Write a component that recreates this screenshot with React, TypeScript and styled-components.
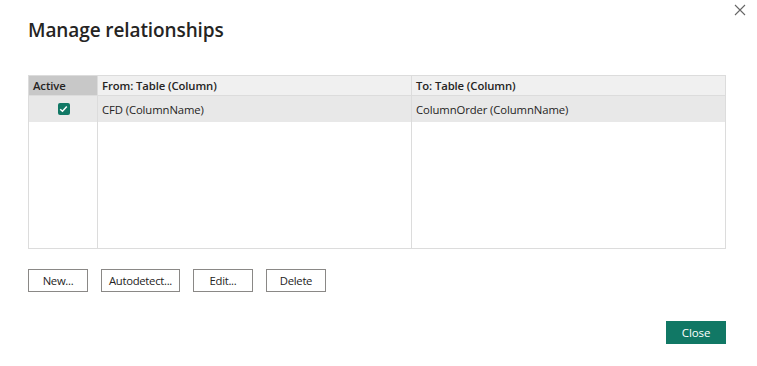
import React from "react";
import styled, { createGlobalStyle } from "styled-components";

const GlobalStyle = createGlobalStyle`
  html, body {
    margin: 0;
    padding: 0;
    background: #ffffff;
    font-family: "Open Sans", "Noto Sans", sans-serif;
    color: #252423;
  }
`;

const Dialog = styled.div`
  position: relative;
  width: 757px;
  height: 366px;
  box-sizing: border-box;
  padding: 14px 31px 0 28px;
  display: flex;
  flex-direction: column;
`;

const CloseX = styled.button`
  position: absolute;
  top: 3px;
  right: 10px;
  width: 14px;
  height: 14px;
  padding: 0;
  border: none;
  background: transparent;
  display: flex;
  align-items: center;
  justify-content: center;
`;

const Title = styled.h1`
  margin: 0;
  font-size: 19px;
  font-weight: 600;
  line-height: 32px;
  color: #252423;
  letter-spacing: -0.1px;
`;

const Table = styled.div`
  margin-top: 29px;
  height: 174px;
  box-sizing: border-box;
  border: 1px solid #dcdcdc;
  display: grid;
  grid-template-columns: 68px 314px 1fr;
  grid-template-rows: 20px 26px 1fr;
`;

const HeadCell = styled.div<{ $active?: boolean; $first?: boolean }>`
  background: ${(p) => (p.$active ? "#c8c8c8" : "#f0f0f0")};
  border-left: ${(p) => (p.$first ? "none" : "1px solid #dcdcdc")};
  border-bottom: 1px solid #dcdcdc;
  font-size: 11.3px;
  font-weight: 600;
  line-height: 20px;
  padding-left: 4px;
  color: #252423;
  white-space: nowrap;
  overflow: hidden;
  letter-spacing: -0.1px;
`;

const Cell = styled.div<{ $first?: boolean; $center?: boolean; $filled?: boolean }>`
  background: ${(p) => (p.$filled ? "#e8e8e8" : "#ffffff")};
  border-left: ${(p) => (p.$first ? "none" : "1px solid #dcdcdc")};
  font-size: 11.3px;
  line-height: 25px;
  padding-left: 4px;
  color: #252423;
  display: flex;
  align-items: center;
  justify-content: ${(p) => (p.$center ? "center" : "flex-start")};
  white-space: nowrap;
  letter-spacing: -0.1px;
`;

const Check = styled.span`
  width: 12px;
  height: 12px;
  border-radius: 2px;
  background: #117865;
  display: flex;
  align-items: center;
  justify-content: center;
  margin-right: 3px;
`;

const ButtonRow = styled.div`
  display: flex;
  gap: 13px;
  margin-top: 20px;
`;

const Button = styled.button<{ $w: number }>`
  width: ${(p) => p.$w}px;
  height: 23px;
  box-sizing: border-box;
  background: #ffffff;
  border: 1px solid #8a8886;
  font-family: "Open Sans", "Noto Sans", sans-serif;
  font-size: 11.3px;
  color: #252423;
  padding: 0;
  letter-spacing: -0.3px;
`;

const Footer = styled.div`
  display: flex;
  justify-content: flex-end;
  margin-top: 29px;
`;

const PrimaryButton = styled.button`
  width: 60px;
  height: 23px;
  background: #117865;
  border: none;
  color: #ffffff;
  font-family: "Open Sans", "Noto Sans", sans-serif;
  font-size: 11.5px;
  padding: 0;
  letter-spacing: -0.1px;
`;

export default function App() {
  return (
    <>
      <GlobalStyle />
      <Dialog>
        <CloseX aria-label="Close">
          <svg width="12" height="12" viewBox="0 0 12 12">
            <path d="M1 1 L11 11 M11 1 L1 11" stroke="#666" strokeWidth="1.1" />
          </svg>
        </CloseX>
        <Title>Manage relationships</Title>
        <Table>
          <HeadCell $active $first>Active</HeadCell>
          <HeadCell>From: Table (Column)</HeadCell>
          <HeadCell>To: Table (Column)</HeadCell>
          <Cell $first $center $filled>
            <Check>
              <svg width="9" height="8" viewBox="0 0 9 8">
                <path d="M1.2 4.2 L3.5 6.3 L7.8 1.6" fill="none" stroke="#fff" strokeWidth="1.5" />
              </svg>
            </Check>
          </Cell>
          <Cell $filled>CFD (ColumnName)</Cell>
          <Cell $filled>ColumnOrder (ColumnName)</Cell>
          <Cell $first />
          <Cell />
          <Cell />
        </Table>
        <ButtonRow>
          <Button $w={60}>New...</Button>
          <Button $w={79}>Autodetect...</Button>
          <Button $w={60}>Edit...</Button>
          <Button $w={60}>Delete</Button>
        </ButtonRow>
        <Footer>
          <PrimaryButton>Close</PrimaryButton>
        </Footer>
      </Dialog>
    </>
  );
}
